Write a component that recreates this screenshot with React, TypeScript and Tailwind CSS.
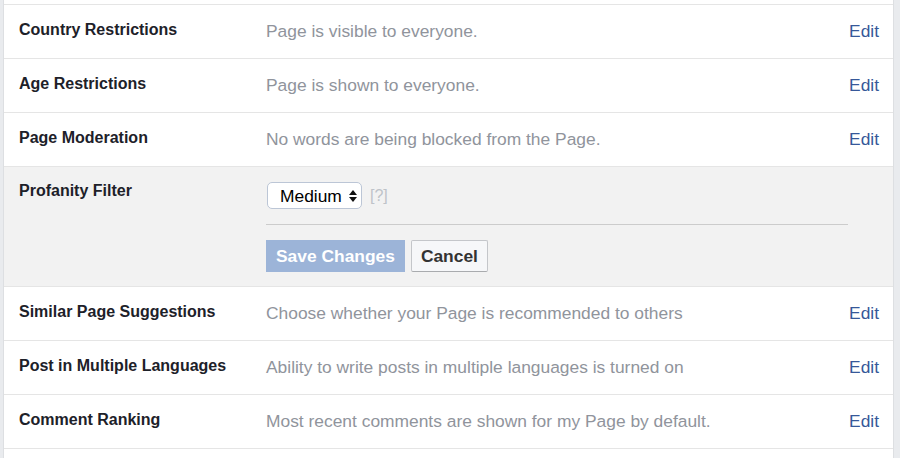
const rows = [
  ["Country Restrictions", "Page is visible to everyone."],
  ["Age Restrictions", "Page is shown to everyone."],
  ["Page Moderation", "No words are being blocked from the Page."],
];

const rowsAfter = [
  ["Similar Page Suggestions", "Choose whether your Page is recommended to others"],
  ["Post in Multiple Languages", "Ability to write posts in multiple languages is turned on"],
  ["Comment Ranking", "Most recent comments are shown for my Page by default."],
];

const font = { fontFamily: '"Liberation Sans", Arial, Helvetica, sans-serif' };

const SettingRow = ({ label, value }: { label: string; value: string }) => (
  <div className="flex items-start border-b border-[#e5e5e5] pl-[15px] pr-[14px] pt-[15px] pb-[16px]">
    <div className="w-[247px] shrink-0 text-[16px] font-bold leading-[20px] text-[#1d2129]">{label}</div>
    <div className="flex-1 text-[17.4px] leading-[22px] text-[#90949c]">{value}</div>
    <a className="text-[17.4px] leading-[22px] text-[#365899]">Edit</a>
  </div>
);

export default function App() {
  return (
    <div className="h-[458px] w-[900px] overflow-hidden bg-[#e9ebee]" style={font}>
      <div className="ml-[3px] w-[891px] border-x border-[#dddfe2] bg-white">
        <div className="h-[5px] border-b border-[#e5e5e5]" />
        {rows.map(([label, value]) => (
          <SettingRow key={label} label={label} value={value} />
        ))}
        <div className="flex items-start border-b border-[#e5e5e5] bg-[#f2f2f2] pl-[15px] pr-[45px] pt-[15px] pb-[14px]">
          <div className="-mt-[1px] w-[247px] shrink-0 text-[16px] font-bold leading-[20px] text-[#1d2129]">Profanity Filter</div>
          <div className="flex-1">
            <div className="flex items-center">
              <div className="ml-[1px] flex h-[27px] w-[95px] items-center rounded-[5px] border border-[#bcc6d6] bg-white pl-[12px] text-[17.4px] leading-[22px] text-black">
                <span>Medium</span>
                <svg className="ml-[7px]" width="8" height="12" viewBox="0 0 8 12">
                  <path d="M4 0 L8 5 L0 5 Z" fill="#111" />
                  <path d="M0 7 L8 7 L4 12 Z" fill="#111" />
                </svg>
              </div>
              <span className="ml-[8px] text-[16px] leading-[20px] text-[#bec3c9]">[?]</span>
            </div>
            <div className="mt-[15px] h-px bg-[#cccccc]" />
            <div className="mt-[15px] flex gap-[6px]">
              <button className="h-[32px] border border-[#9cb4d8] bg-[#9cb4d8] px-[9px] text-[17.4px] font-bold leading-[22px] text-white">
                Save Changes
              </button>
              <button className="h-[32px] rounded-[2px] border border-[#c4c6ca] border-b-[#a9abae] bg-[#f6f7f9] px-[9px] text-[17.4px] font-bold leading-[22px] text-[#333333]">
                Cancel
              </button>
            </div>
          </div>
        </div>
        {rowsAfter.map(([label, value]) => (
          <SettingRow key={label} label={label} value={value} />
        ))}
        <div className="h-[12px]" />
      </div>
    </div>
  );
}
